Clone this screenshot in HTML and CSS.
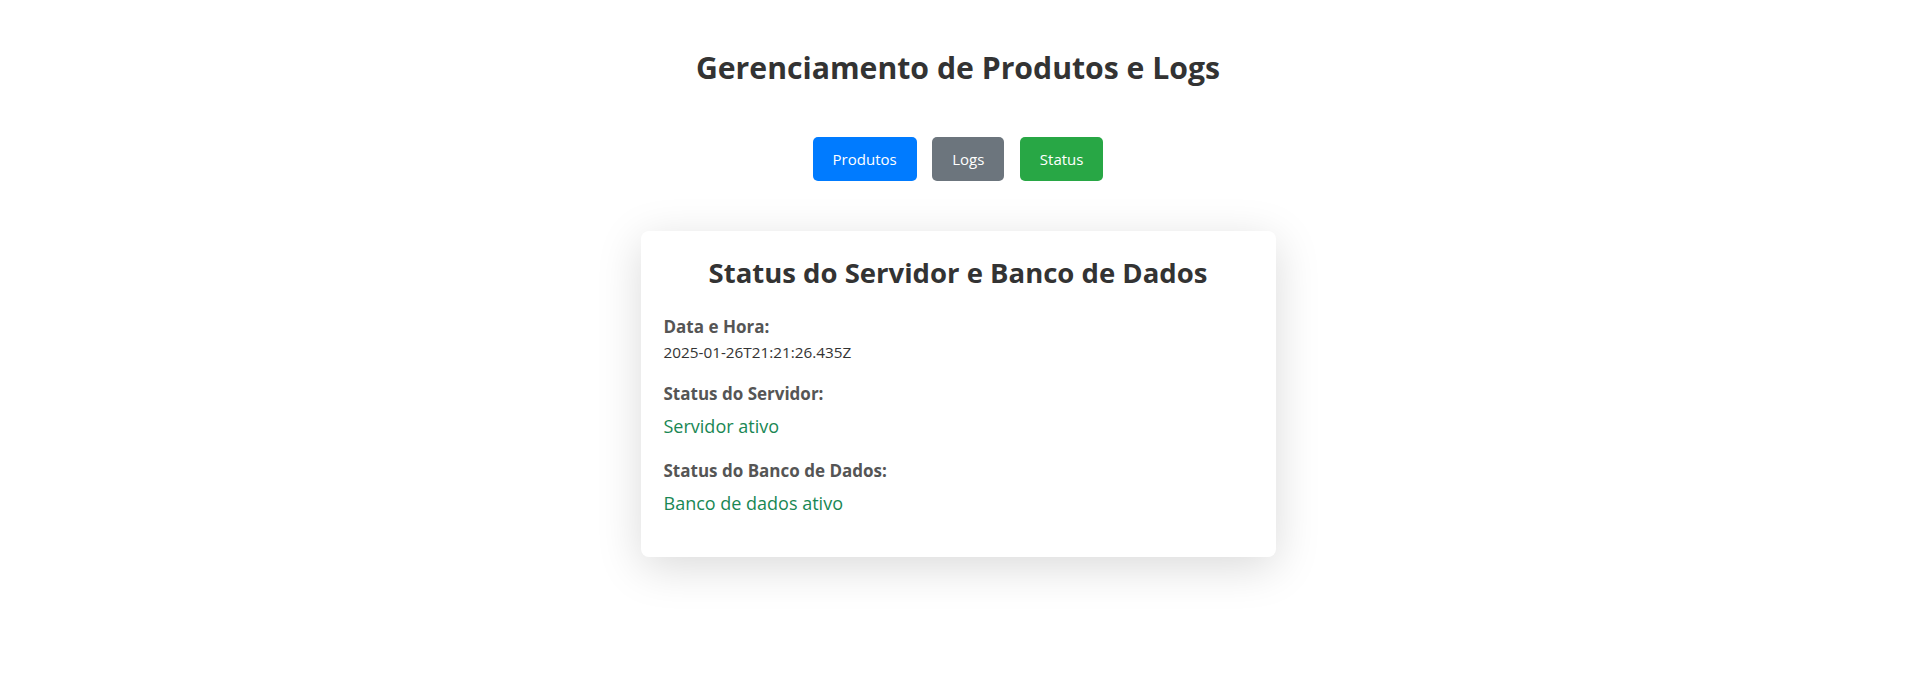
FILE: index.html
```html
<!DOCTYPE html>
<html lang="pt-BR">
<head>
<meta charset="utf-8">
<title>Gerenciamento de Produtos e Logs</title>
<link rel="stylesheet" href="styles.css">
</head>
<body>
<div class="page">
  <h1 class="page-title">Gerenciamento de Produtos e Logs</h1>
  <nav class="nav">
    <button class="btn btn-blue">Produtos</button>
    <button class="btn btn-gray">Logs</button>
    <button class="btn btn-green">Status</button>
  </nav>
  <section class="card">
    <h2 class="card-title">Status do Servidor e Banco de Dados</h2>
    <div class="items">
      <div class="item item-tight">
        <strong class="label">Data e Hora:</strong>
        <span class="stamp">2025-01-26T21:21:26.435Z</span>
      </div>
      <div class="item">
        <strong class="label">Status do Servidor:</strong>
        <span class="ok">Servidor ativo</span>
      </div>
      <div class="item">
        <strong class="label">Status do Banco de Dados:</strong>
        <span class="ok">Banco de dados ativo</span>
      </div>
    </div>
  </section>
</div>
</body>
</html>
```

FILE: styles.css
```css
html, body {
  margin: 0;
  padding: 0;
  background: #ffffff;
}

body {
  font-family: "Open Sans", "Noto Sans", sans-serif;
  color: #333333;
  min-height: 692px;
}

.page {
  padding-top: 50px;
  padding-bottom: 120px;
  display: flex;
  flex-direction: column;
  align-items: center;
}

.page-title {
  margin: 0;
  font-size: 30.2px;
  line-height: 36px;
  font-weight: 700;
  color: #333333;
  text-align: center;
}

.nav {
  margin-top: 51px;
  display: flex;
  gap: 15.5px;
}

.btn {
  font-family: "Open Sans", "Noto Sans", sans-serif;
  font-size: 15px;
  line-height: 24px;
  padding: 10px 20px;
  border: none;
  border-radius: 5px;
  color: #ffffff;
  cursor: pointer;
}

.btn-blue { background: #007bff; }
.btn-gray { background: #6c757d; }
.btn-green { background: #28a745; }

.card {
  margin-top: 50px;
  box-sizing: border-box;
  width: 635px;
  padding: 25px 23px 42px;
  background: #ffffff;
  border-radius: 8px;
  box-shadow: 0 10px 45px rgba(0, 0, 0, 0.15);
}

.card-title {
  margin: 0;
  font-size: 27.5px;
  line-height: 33px;
  font-weight: 700;
  color: #333333;
  text-align: center;
}

.items {
  margin-top: 27px;
  display: flex;
  flex-direction: column;
  gap: 21.5px;
}

.item {
  display: flex;
  flex-direction: column;
  gap: 9px;
}

.item-tight {
  gap: 3.5px;
}

.label {
  font-size: 17px;
  line-height: 22px;
  font-weight: 700;
  color: #555555;
}

.stamp {
  font-size: 15.3px;
  line-height: 20px;
  color: #333333;
}

.ok {
  font-size: 18px;
  line-height: 24px;
  color: #198754;
}
```
